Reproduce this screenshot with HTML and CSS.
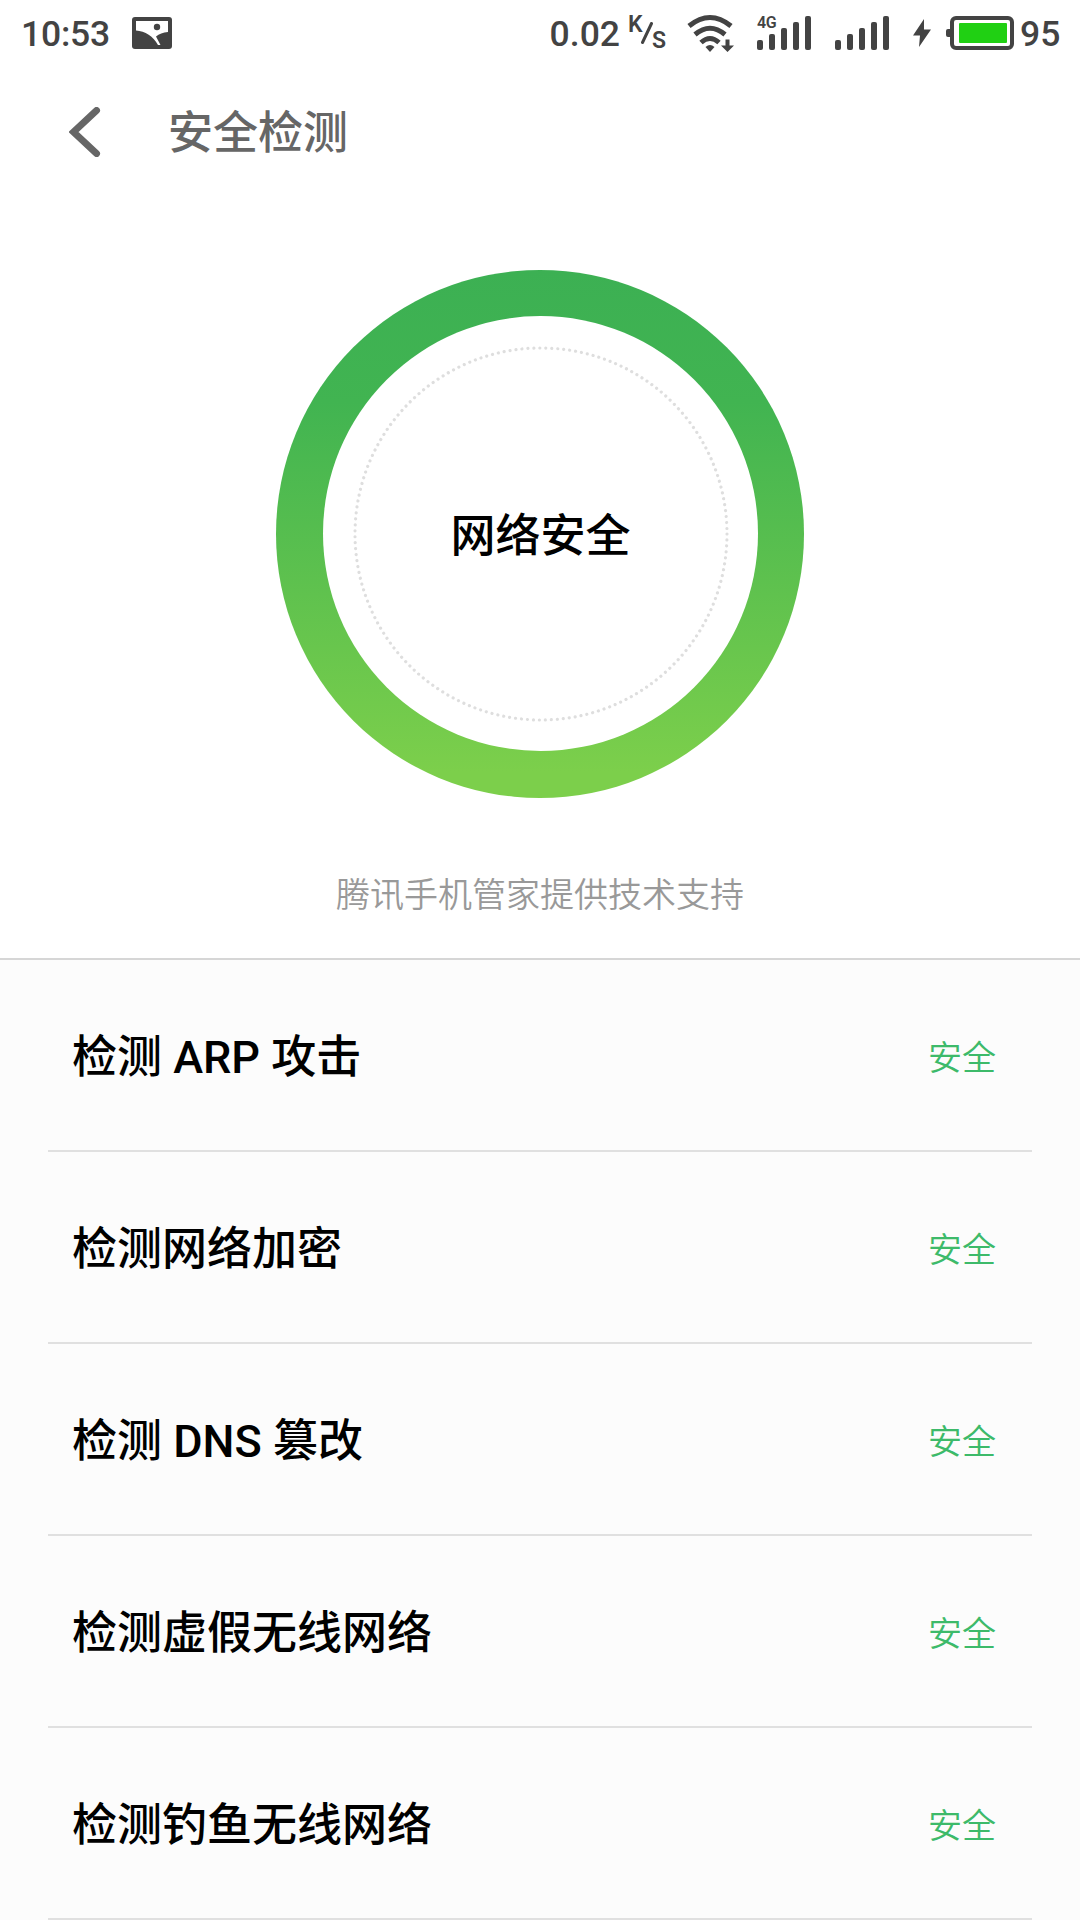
FILE: index.html
```html
<!DOCTYPE html>
<html lang="zh-CN">
<head>
    <meta charset="UTF-8">
    <meta name="viewport" content="width=device-width, initial-scale=1.0">
    <title>安全检测</title>
    <link rel="stylesheet" href="styles.css">
</head>
<body>
    <div class="status-bar">
        <span class="time">10:53</span>
        <svg class="picture-icon" width="40" height="32" viewBox="0 0 40 32">
            <rect width="40" height="32" rx="3" fill="#434343"/>
            <path d="M4 4h32v11C31 15.500 27 17 24 19.500L28.500 28H26C21.500 19.500 13 14 4 13.500z" fill="#fff"/>
            <circle cx="25" cy="10" r="3.200" fill="#434343"/>
        </svg>
        <span class="speed">0.02</span>
        <span class="unit"><span class="unit-k">K</span><svg class="unit-slash" width="12" height="22" viewBox="0 0 12 22"><path d="M1.500 20.500L10.500 1.500" stroke="#434343" stroke-width="3" stroke-linecap="round"/></svg><span class="unit-s">S</span></span>
        <svg class="wifi-icon" width="48" height="40" viewBox="0 0 48 40">
            <g fill="none" stroke="#434343" stroke-width="5">
                <path d="M2 13Q23 -4 44 13"/>
                <path d="M8 21.500Q23 9 38 21.500"/>
                <path d="M14 29.500Q23 21.500 32 29.500"/>
            </g>
            <path d="M18.500 34Q23 30 27.500 34L23 39z" fill="#434343"/>
            <path d="M38.500 26.500h4v6H47L40.500 39 34 32.500h4.500z" fill="#434343"/>
        </svg>
        <div class="signal">
            <span class="network">4G</span>
            <i class="b1"></i><i class="b2"></i><i class="b3"></i><i class="b4"></i><i class="b5"></i>
        </div>
        <div class="signal">
            <i class="b1"></i><i class="b2"></i><i class="b3"></i><i class="b4"></i><i class="b5"></i>
        </div>
        <svg class="bolt-icon" width="20" height="30" viewBox="0 0 20 30">
            <path d="M12 1L1 17.500h7L7 29 19 11.500h-7z" fill="#434343"/>
        </svg>
        <svg class="battery-icon" width="68" height="34" viewBox="0 0 68 34">
            <rect x="0" y="13" width="6" height="8" rx="2" fill="#434343"/>
            <rect x="6" y="2" width="60" height="30" rx="4" fill="#fff" stroke="#434343" stroke-width="4"/>
            <rect x="13" y="7" width="48" height="20" rx="1" fill="#20d013"/>
        </svg>
        <span class="battery">95</span>
    </div>

    <div class="header">
        <svg class="back" width="32" height="50" viewBox="0 0 32 50">
            <path d="M27.500 3.500L4.500 25L27.500 46.500" fill="none" stroke="#666" stroke-width="7" stroke-linecap="round"/>
        </svg>
        <h1 class="title">安全检测</h1>
    </div>

    <div class="result">
        <div class="ring">
            <div class="ring-inner">
                <svg class="dots" width="376" height="376" viewBox="0 0 376 376">
                    <circle cx="188" cy="188" r="186" fill="none" stroke="#dedede" stroke-width="3.200" stroke-linecap="round" stroke-dasharray="0.010 5.983"/>
                </svg>
                <span class="ring-text">网络安全</span>
            </div>
        </div>
        <p class="support">腾讯手机管家提供技术支持</p>
    </div>

    <ul class="list">
        <li class="item"><span class="name">检测 ARP 攻击</span><span class="state">安全</span></li>
        <li class="item"><span class="name">检测网络加密</span><span class="state">安全</span></li>
        <li class="item"><span class="name">检测 DNS 篡改</span><span class="state">安全</span></li>
        <li class="item"><span class="name">检测虚假无线网络</span><span class="state">安全</span></li>
        <li class="item"><span class="name">检测钓鱼无线网络</span><span class="state">安全</span></li>
    </ul>
</body>
</html>
```
FILE: styles.css
```css
* {
    box-sizing: border-box;
}
body {
    margin: 0;
    background-color: #fff;
    font-family: Roboto, "Noto Sans CJK SC", sans-serif;
    overflow: hidden;
}

/* Barra de estado */
.status-bar {
    display: flex;
    align-items: center;
    height: 66px;
    padding-left: 21px;
    color: #434343;
    font-size: 35.5px;
    font-weight: 500;
    line-height: 66px;
}
.time,
.speed,
.battery {
    padding-top: 1px;
}
.time {
    width: 89px;
    letter-spacing: -0.2px;
}
.picture-icon {
    margin-left: 22px;
}
.speed {
    margin-left: auto;
}
.unit {
    display: flex;
    height: 34px;
    margin-left: 8px;
    font-size: 23px;
    font-weight: 600;
    line-height: 18px;
}
.unit-k {
    width: 13px;
}
.unit-slash {
    margin-top: 6px;
}
.unit-s {
    width: 13px;
    margin-top: 16px;
    margin-left: -1px;
}
.wifi-icon {
    margin-left: 22px;
}
.signal {
    position: relative;
    display: flex;
    align-items: flex-end;
    gap: 6px;
    height: 34px;
    margin-left: 22px;
}
.signal + .signal {
    margin-left: 24px;
}
.signal i {
    width: 6px;
    border-radius: 2px;
    background-color: #434343;
}
.b1 { height: 10px; }
.b2 { height: 16px; }
.b3 { height: 22px; }
.b4 { height: 28px; }
.b5 { height: 34px; }
.network {
    position: absolute;
    top: 0;
    left: 0;
    font-size: 16px;
    font-weight: 600;
    line-height: 13px;
    letter-spacing: -0.5px;
}
.bolt-icon {
    margin-left: 23px;
}
.battery-icon {
    margin-left: 14px;
}
.battery {
    width: 60px;
    margin-left: 6px;
}

/* Encabezado */
.header {
    display: flex;
    align-items: center;
    height: 132px;
    padding-left: 69px;
}
.title {
    margin: 0 0 0 67px;
    padding-bottom: 5px;
    color: #666;
    font-size: 45px;
    font-weight: 500;
}

/* Resultado */
.result {
    height: 762px;
    padding-top: 72px;
    border-bottom: 2px solid #d6d6d6;
}
.ring {
    width: 528px;
    height: 528px;
    margin: 0 auto;
    padding: 46px 46px 46px 47px;
    border-radius: 50%;
    background: linear-gradient(#3cb053, #41b451 25%, #7ccf4b 95%);
}
.ring-inner {
    display: grid;
    place-items: center;
    width: 435px;
    height: 435px;
    border-radius: 50%;
    background-color: #fff;
}
.dots,
.ring-text {
    grid-area: 1 / 1;
}
.ring-text {
    padding-bottom: 3px;
    color: #000;
    font-size: 45px;
    font-weight: 500;
}
.support {
    margin: 72px 0 0;
    color: #999;
    font-size: 34px;
    font-weight: 350;
    line-height: 50px;
    text-align: center;
}

/* Lista */
.list {
    margin: 0;
    padding: 0 48px;
    list-style: none;
    background-color: #fcfcfc;
}
.item {
    display: flex;
    align-items: center;
    justify-content: space-between;
    height: 192px;
    padding: 0 36px 0 24px;
    border-bottom: 2px solid #e0e0e0;
}
.name {
    padding-bottom: 3px;
    color: #000;
    font-size: 45px;
    font-weight: 500;
}
.state {
    color: #3dba6a;
    font-size: 34px;
    font-weight: 350;
}
```
